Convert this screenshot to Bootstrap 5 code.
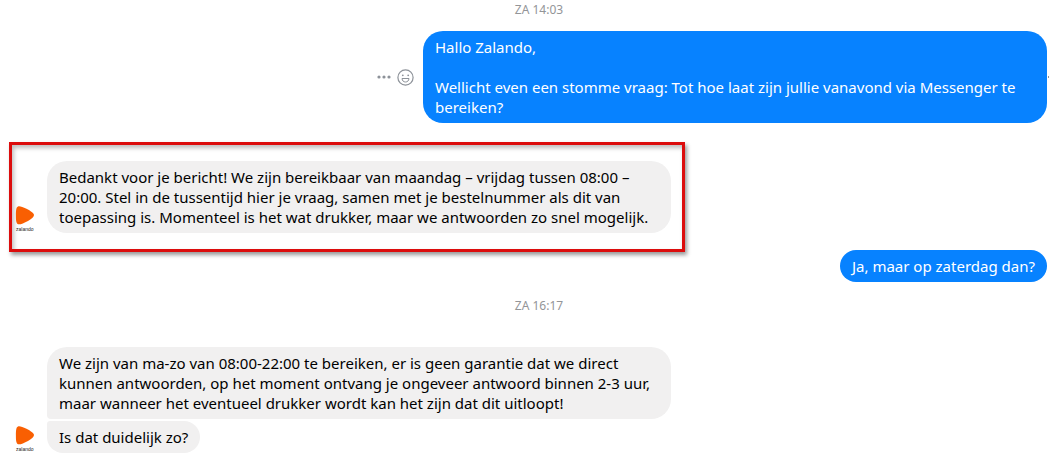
<!DOCTYPE html>
<html lang="nl">
<head>
<meta charset="utf-8">
<meta name="viewport" content="width=device-width, initial-scale=1">
<title>Zalando – Messenger</title>
<link href="https://cdn.jsdelivr.net/npm/bootstrap@5.3.0/dist/css/bootstrap.min.css" rel="stylesheet">
<style>
body{font:15px/20px "Segoe UI","Noto Sans",sans-serif;color:#000;background:#fff}
.stamp{font-size:12px;line-height:20px;color:#939598;padding-left:29px}
.stamp-later{margin:14px 0 31px}
.bubble{padding:6px 12px;border-radius:20px;background:#f1f0f0}
.bubble.wide{width:100%;max-width:624px}
.bubble.mine{background:#0782ff;color:#fff}
.sent{padding-right:2px}
.sent-first{margin:11px 0 19px;padding-right:0}
.edge-dot{width:1px;height:2px;margin-left:1px;background:#8d9299}
.tools{gap:5px;margin-right:9px}
.tools button{line-height:0;color:#8d9299}
.highlight{max-width:676px;margin:0 0 -2px 9px;border:3px solid #dc0d0d;padding:16px 11px 16px 3px;box-shadow:2px 3px 4px rgba(0,0,0,.4),inset 2px 3px 4px rgba(0,0,0,.25)}
.received{padding-left:15px}
.avatar{width:20px;margin-right:12px}
.stack{gap:2px}
.joined-below{border-bottom-left-radius:4px}
.joined-above{border-top-left-radius:4px}
.end{padding-bottom:4px}
</style>
</head>
<body>
<svg class="d-none" xmlns="http://www.w3.org/2000/svg">
  <symbol id="zalando" viewBox="0 0 20 27">
    <path fill="#f95f02" d="M3 .4C5 0 7.500.8 11.500 2.800s7.500 4.500 7.500 6.200-1.800 3.700-6 5.900S5 18.700 3 18.200C1 17.300.9 13.500.9 9.500S1 1 3 .4Z"/>
    <text x="1" y="25" font-family="Liberation Sans, sans-serif" font-size="5" fill="#222">zalando</text>
  </symbol>
</svg>
<main class="d-flex flex-column overflow-hidden">
  <time class="stamp text-center">ZA 14:03</time>

  <div class="sent-first d-flex justify-content-end align-items-center">
    <div class="tools d-flex align-items-center">
      <button type="button" class="btn p-0 border-0" aria-label="Meer">
        <svg width="15" height="16" viewBox="0 0 15 16" fill="currentColor"><circle cx="2" cy="8" r="1.600"/><circle cx="7" cy="8" r="1.600"/><circle cx="12" cy="8" r="1.600"/></svg>
      </button>
      <button type="button" class="btn p-0 border-0" aria-label="Reageren">
        <svg width="17" height="17" viewBox="0 0 17 17" fill="none" stroke="currentColor"><circle cx="8.500" cy="8.500" r="7.600" stroke-width="1.200"/><circle cx="5.800" cy="6.300" r=".9" fill="currentColor" stroke="none"/><circle cx="11.200" cy="6.300" r=".9" fill="currentColor" stroke="none"/><path d="M5 9.500h7c-.2 2.200-1.500 3.500-3.500 3.500S5.200 11.700 5 9.500Z"/></svg>
      </button>
    </div>
    <div class="bubble wide mine">Hallo Zalando,<br><br>Wellicht even een stomme vraag: Tot hoe laat zijn jullie vanavond via Messenger te<br>bereiken?</div>
    <span class="edge-dot"></span>
  </div>

  <section class="highlight d-flex align-items-end">
    <svg class="avatar flex-shrink-0" height="27" role="img" aria-label="Zalando"><use href="#zalando"/></svg>
    <div class="bubble wide">Bedankt voor je bericht! We zijn bereikbaar van maandag – vrijdag tussen 08:00 –<br>20:00. Stel in de tussentijd hier je vraag, samen met je bestelnummer als dit van<br>toepassing is. Momenteel is het wat drukker, maar we antwoorden zo snel mogelijk.</div>
  </section>

  <div class="sent d-flex justify-content-end">
    <div class="bubble mine">Ja, maar op zaterdag dan?</div>
  </div>

  <time class="stamp stamp-later text-center">ZA 16:17</time>

  <div class="received end d-flex align-items-end">
    <svg class="avatar flex-shrink-0" height="27" role="img" aria-label="Zalando"><use href="#zalando"/></svg>
    <div class="stack d-flex flex-column align-items-start flex-grow-1">
      <div class="bubble wide joined-below">We zijn van ma-zo van 08:00-22:00 te bereiken, er is geen garantie dat we direct<br>kunnen antwoorden, op het moment ontvang je ongeveer antwoord binnen 2-3 uur,<br>maar wanneer het eventueel drukker wordt kan het zijn dat dit uitloopt!</div>
      <div class="bubble joined-above">Is dat duidelijk zo?</div>
    </div>
  </div>
</main>
<script src="https://cdn.jsdelivr.net/npm/bootstrap@5.3.0/dist/js/bootstrap.bundle.min.js"></script>
</body>
</html>
